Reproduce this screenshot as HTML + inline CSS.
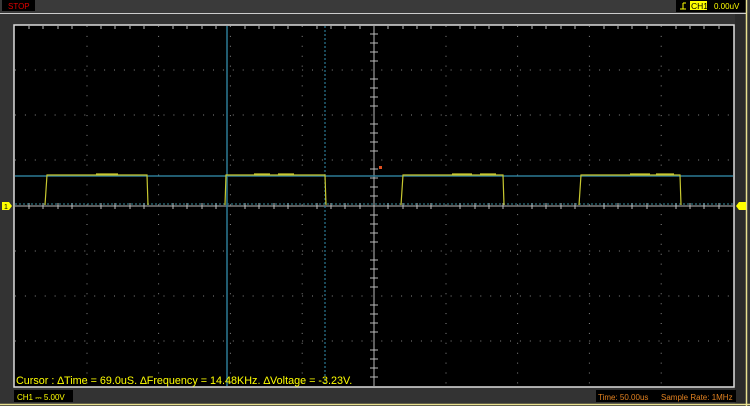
<!DOCTYPE html>
<html><head><style>
body{margin:0;background:#333;width:750px;height:406px;overflow:hidden;font-family:"Liberation Sans",sans-serif}
</style></head><body>
<svg width="750" height="406" xmlns="http://www.w3.org/2000/svg" style="position:absolute;left:0;top:0">
<rect width="750" height="406" fill="#333"/>
<rect x="0" y="0" width="750" height="13" fill="#3a3a3a"/>
<rect x="2" y="0" width="33" height="11" fill="#000"/>
<text x="8" y="9" font-size="8" fill="#e00000" font-family="Liberation Sans">STOP</text>
<rect x="676" y="0" width="70" height="12" fill="#000"/>
<path d="M680 9h6M683 9V3M683 3h3" stroke="#ff0" stroke-width="1" fill="none"/>
<rect x="690" y="1" width="17" height="9" fill="#ff0"/>
<text x="691" y="9" font-size="8.5" fill="#000">CH1</text>
<text x="714" y="9" font-size="8" fill="#ff0">0.00uV</text>
<line x1="0" y1="13.5" x2="746" y2="13.5" stroke="#ccc"/>
<rect x="735" y="14" width="11" height="390" fill="#2a2a2a"/>
<line x1="746.5" y1="0" x2="746.5" y2="406" stroke="#e8e090" stroke-width="1.5"/>
<line x1="0" y1="404.5" x2="750" y2="404.5" stroke="#e8e090" stroke-width="1.5"/>
<rect x="14" y="25" width="720" height="362" fill="#000" stroke="#ddd" stroke-width="1.5"/>
<g stroke="#888" stroke-width="1" stroke-dasharray="1 8.9">
<path d="M87 26V386M158.6 26V386M230.4 26V386M302.2 26V386M446 26V386M517.6 26V386M589.4 26V386M661.2 26V386"/>
<path d="M15 70H733M15 115H733M15 160H733M15 251H733M15 296H733M15 341H733"/>
</g>
<g stroke="#bbb">
<line x1="374" y1="26" x2="374" y2="386"/>
<line x1="15" y1="206" x2="733" y2="206"/>
</g>
<g stroke="#bbb" stroke-width="1">
<path d="M370 34h8M370 43h8M370 52h8M370 61h8M370 79h8M370 88h8M370 97h8M370 106h8M370 124h8M370 133h8M370 142h8M370 151h8M370 169h8M370 178h8M370 187h8M370 196h8M370 215h8M370 224h8M370 233h8M370 242h8M370 260h8M370 269h8M370 278h8M370 287h8M370 305h8M370 314h8M370 323h8M370 332h8M370 350h8M370 359h8M370 368h8M370 377h8"/>
</g>
<path d="M29 203v6M43 203v6M58 203v6M72 203v6M101 203v6M115 203v6M130 203v6M144 203v6M173 203v6M187 203v6M202 203v6M216 203v6M245 203v6M259 203v6M274 203v6M288 203v6M317 203v6M331 203v6M345 203v6M360 203v6M388 203v6M403 203v6M417 203v6M431 203v6M460 203v6M475 203v6M489 203v6M503 203v6M532 203v6M546 203v6M561 203v6M575 203v6M604 203v6M618 203v6M632 203v6M647 203v6M676 203v6M690 203v6M704 203v6M719 203v6" stroke="#bbb"/>
<path d="M29 26v3M43 26v3M58 26v3M72 26v3M101 26v3M115 26v3M130 26v3M144 26v3M173 26v3M187 26v3M202 26v3M216 26v3M245 26v3M259 26v3M274 26v3M288 26v3M317 26v3M331 26v3M345 26v3M360 26v3M388 26v3M403 26v3M417 26v3M431 26v3M460 26v3M475 26v3M489 26v3M503 26v3M532 26v3M546 26v3M561 26v3M575 26v3M604 26v3M618 26v3M632 26v3M647 26v3M676 26v3M690 26v3M704 26v3M719 26v3" stroke="#bbb"/>
<line x1="15" y1="204" x2="733" y2="204" stroke="#3a8fa0" stroke-dasharray="2 2"/>
<line x1="15" y1="176" x2="733" y2="176" stroke="#2c7a96" stroke-width="1.5"/>
<line x1="227" y1="26" x2="227" y2="386" stroke="#2c7a96" stroke-width="1.5"/>
<line x1="325" y1="26" x2="325" y2="386" stroke="#2c7a96" stroke-width="1.2" stroke-dasharray="2 2"/>
<g fill="none" stroke="#c8c830" stroke-width="1.2">
<path d="M45 205L47 175H147L148 205"/>
<path d="M225 205L226 175H325L326 205"/>
<path d="M401 205L403 175H503L504 205"/>
<path d="M579 205L581 175H680L681 205"/>
</g>
<g stroke="#c8c830" stroke-width="1.3"><path d="M96 174h22M254 174h16M278 174h16M452 174h20M480 174h16M630 174h20M656 174h18"/></g>
<rect x="379" y="166" width="3" height="3" fill="#e05020"/>
<path d="M2 202h7l3 4-3 4h-7z" fill="#ff0"/>
<text x="4" y="209" font-size="7" fill="#000">1</text>
<path d="M746 202h-7l-3 4 3 4h7z" fill="#ff0"/>
<text x="16" y="384" font-size="10.8" fill="#ff0">Cursor : ∆Time = 69.0uS. ∆Frequency = 14.48KHz. ∆Voltage = -3.23V.</text>
<rect x="14" y="390" width="59" height="12" fill="#000"/>
<text x="17" y="400" font-size="8" fill="#ff0">CH1 ⎓  5.00V</text>
<rect x="596" y="390" width="140" height="12" fill="#000"/>
<text x="598" y="400" font-size="8" fill="#e08020">Time: 50.00us</text>
<text x="661" y="400" font-size="8" fill="#e08020">Sample Rate: 1MHz</text>
</svg>
</body></html>
